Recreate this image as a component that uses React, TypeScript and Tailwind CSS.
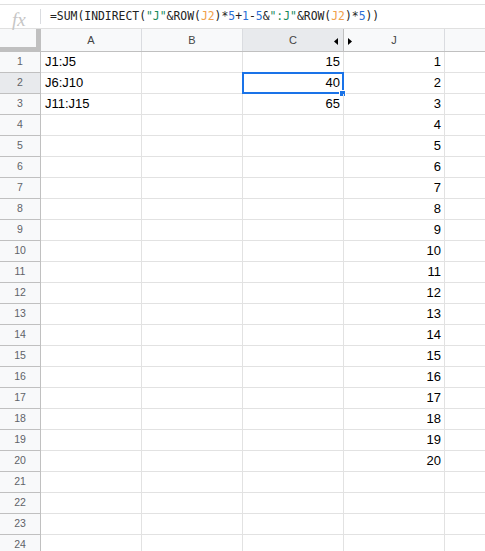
import React from 'react';

const font = { fontFamily: '"Liberation Sans", Arial, sans-serif' };

const colA = ['J1:J5', 'J6:J10', 'J11:J15'];
const colC = ['15', '40', '65'];

const Formula: React.FC = () => (
  <div className="pl-[50px] text-[11.4px] text-[#222] whitespace-nowrap" style={{ fontFamily: '"DejaVu Sans Mono", monospace' }}>
    <span>=SUM(INDIRECT(</span>
    <span className="text-[#188a5c]">"J"</span>
    <span>&amp;ROW(</span>
    <span className="text-[#f0a04b]">J2</span>
    <span>)*</span>
    <span className="text-[#2a6fd6]">5</span>
    <span>+</span>
    <span className="text-[#2a6fd6]">1</span>
    <span>-</span>
    <span className="text-[#2a6fd6]">5</span>
    <span>&amp;</span>
    <span className="text-[#188a5c]">":J"</span>
    <span>&amp;ROW(</span>
    <span className="text-[#f0a04b]">J2</span>
    <span>)*</span>
    <span className="text-[#2a6fd6]">5</span>
    <span>))</span>
  </div>
);

export default function App() {
  const rows = Array.from({ length: 24 }, (_, i) => i + 1);

  return (
    <div className="w-[485px] h-[551px] overflow-hidden bg-white" style={font}>
      {/* formula bar */}
      <div className="mt-[4px] h-[25px] border-t border-b border-[#e0e0e0] flex items-center relative">
        <span className="absolute left-[12px] top-[1px] text-[19px] italic text-[#c6c6c6]" style={{ fontFamily: '"Liberation Serif", serif' }}>fx</span>
        <div className="absolute left-[40px] top-[4px] h-[15px] w-px bg-[#dadce0]" />
        <Formula />
      </div>

      {/* column headers */}
      <div className="flex h-[23px] border-b border-[#c0c0c0] bg-[#f8f9fa] text-[11px] text-[#444]">
        <div className="w-[41px] h-[23px] shrink-0 border-r-[5px] border-b-[5px] border-[#c0c0c0] -mb-px box-border" />
        <div className="w-[101px] shrink-0 border-r border-[#dadce0] flex items-center justify-center">A</div>
        <div className="w-[101px] shrink-0 border-r border-[#dadce0] flex items-center justify-center">B</div>
        <div className="w-[101px] shrink-0 border-r border-[#c0c0c0] bg-[#e8eaed] flex items-center justify-center relative">
          C
          <svg className="absolute right-[5px] top-[9px]" width="4" height="7" viewBox="0 0 4 7">
            <path d="M4 0 L0 3.5 L4 7 Z" fill="#000" />
          </svg>
        </div>
        <div className="w-[101px] shrink-0 border-r border-[#dadce0] flex items-center justify-center relative">
          J
          <svg className="absolute left-[4px] top-[9px]" width="4" height="7" viewBox="0 0 4 7">
            <path d="M0 0 L4 3.5 L0 7 Z" fill="#000" />
          </svg>
        </div>
        <div className="flex-1" />
      </div>

      {/* grid rows */}
      {rows.map((r) => {
        const selected = r === 2;
        const a = colA[r - 1] ?? '';
        const c = colC[r - 1] ?? '';
        const j = r <= 20 ? String(r) : '';
        return (
          <div key={r} className="flex h-[21px] border-b border-[#e2e2e2] text-[13px] text-black">
            <div
              className={`w-[41px] shrink-0 border-r border-[#c0c0c0] flex items-center justify-center text-[10.5px] text-[#5f6368] -mb-px ${
                selected ? 'bg-[#e8eaed]' : 'bg-[#f8f9fa]'
              } border-b`}
            >
              {r}
            </div>
            <div className="w-[101px] shrink-0 border-r border-[#e2e2e2] flex items-center pl-[4px]">{a}</div>
            <div className="w-[101px] shrink-0 border-r border-[#e2e2e2]" />
            <div className="w-[101px] shrink-0 border-r border-[#e2e2e2] flex items-center justify-end pr-[3px] relative">
              {c}
              {selected && (
                <>
                  <div className="absolute -left-[1px] -top-[1px] w-[102px] h-[22px] border-2 border-[#1a73e8]" />
                  <div className="absolute left-[96px] top-[17px] w-[7px] h-[7px] bg-[#1a73e8] border border-white" />
                </>
              )}
            </div>
            <div className="w-[101px] shrink-0 border-r border-[#e2e2e2] flex items-center justify-end pr-[3px]">{j}</div>
            <div className="flex-1" />
          </div>
        );
      })}
    </div>
  );
}
